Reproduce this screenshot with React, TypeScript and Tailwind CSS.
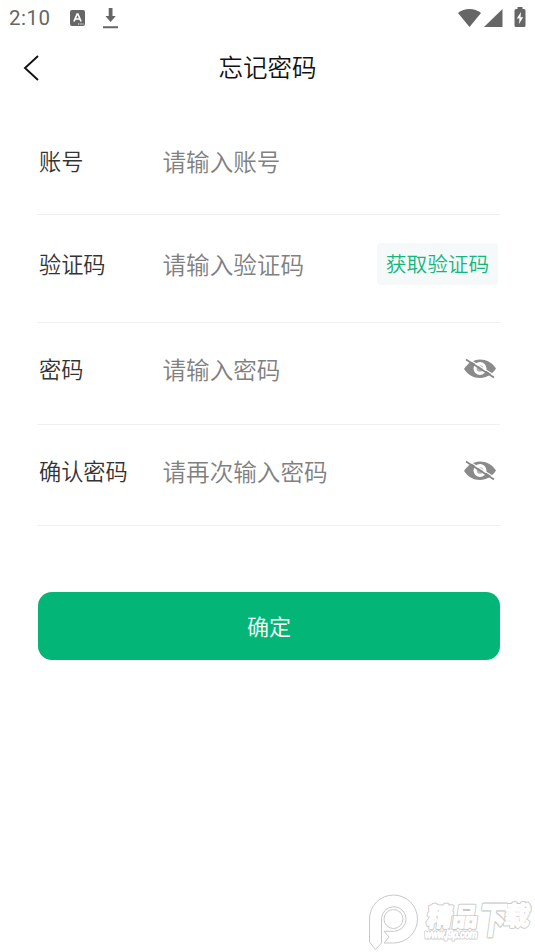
import { useState, type ReactNode } from "react";

type FieldProps = {
  id: string;
  label: string;
  placeholder: string;
  type?: string;
  className: string;
  children?: ReactNode;
};

function StatusBar() {
  return (
    <div className="flex h-9 items-center justify-between pl-[9px] pr-[9px] text-[#666]">
      <div className="flex items-center">
        <span className="w-[61px] font-[Roboto,sans-serif] text-[20.5px] leading-9 tracking-[0.5px]">
          2:10
        </span>
        <svg width="15" height="16" viewBox="0 0 15 16">
          <rect width="15" height="16" rx="2" fill="currentColor" />
          <path
            d="M4 11.5 7.1 4h.8l3.1 7.5M5.2 9h4.6"
            fill="none"
            stroke="#fff"
            strokeWidth="1.7"
          />
          <path d="M8 14h1.3M10.3 14h1.3M12.5 14h1" stroke="#fff" />
        </svg>
        <svg className="ml-[18px]" width="15" height="21" viewBox="0 0 15 21">
          <path
            d="M5.7 0h3.8v8h3.3l-5.2 6-5.2-6h3.3zM0 18.2h15v2H0z"
            fill="currentColor"
          />
        </svg>
      </div>
      <div className="flex items-center">
        <svg width="23" height="19" viewBox="0 0 23 19" fill="currentColor">
          <path d="M0 4Q5 0 11.5 0T23 4L11.5 18z" />
        </svg>
        <svg
          className="ml-[3px]"
          width="19"
          height="19"
          viewBox="0 0 19 19"
          fill="currentColor"
        >
          <path d="M18.5 0v18H0z" />
        </svg>
        <svg
          className="mb-0.5 ml-[11px]"
          width="12"
          height="20"
          viewBox="0 0 12 20"
        >
          <path
            d="M3.5 0h5v2H10a1.5 1.5 0 0 1 1.5 1.5v15A1.5 1.5 0 0 1 10 20H2a1.5 1.5 0 0 1-1.5-1.5v-15A1.5 1.5 0 0 1 2 2h1.5z"
            fill="currentColor"
          />
          <path d="M7 5 2.8 11.5h2.7L5 17l4.2-6.7H6.5z" fill="#fff" />
        </svg>
      </div>
    </div>
  );
}

function EyeOffIcon() {
  return (
    <svg width="32" height="22" viewBox="0 0 32 22">
      <path
        d="M0 11C4 5 9.500 1.500 16 1.500s12 3 16 9c-4 6-9.500 9.500-16 9.500S4 17 0 11z"
        fill="#8a8a8a"
      />
      <circle cx="16" cy="10.500" r="6.500" fill="#fff" />
      <circle cx="16" cy="10.500" r="3.300" fill="#b0b0b0" />
      <path d="M3 0 31 17.700" stroke="#fff" strokeWidth="1.200" />
      <path d="M2 1.500 30 19.500" stroke="#858585" strokeWidth="1.700" />
    </svg>
  );
}

function PasswordToggle({ onClick }: { onClick: () => void }) {
  return (
    <button
      type="button"
      aria-label="显示密码"
      className="mr-1 mb-px shrink-0"
      onClick={onClick}
    >
      <EyeOffIcon />
    </button>
  );
}

function Field({
  id,
  label,
  placeholder,
  type = "text",
  className,
  children,
}: FieldProps) {
  return (
    <div
      className={`flex items-center border-b border-[#f0f0f0] pl-0.5 ${className}`}
    >
      <label
        htmlFor={id}
        className="mb-[3px] w-[123.500px] shrink-0 text-[22.2px] leading-8 font-[350] text-[#333]"
      >
        {label}
      </label>
      <input
        id={id}
        type={type}
        placeholder={placeholder}
        className="mb-px h-9 min-w-0 flex-1 bg-transparent text-[23.6px] font-[350] text-[#333] outline-none placeholder:text-[#808080]"
      />
      {children}
    </div>
  );
}

function WatermarkText() {
  return (
    <>
      <g className="font-['Noto_Sans_CJK_SC',sans-serif] font-bold">
        <text transform="translate(66 41) skewX(-8)" fontSize="25.5">
          精品
        </text>
        <text transform="translate(118 48) skewX(-8) scale(1 1.4)" fontSize="26">
          下
        </text>
        <text transform="translate(143 40) skewX(-8)" fontSize="26">
          载
        </text>
      </g>
      <text
        x="65"
        y="53"
        fontSize="11"
        textLength="52"
        lengthAdjust="spacingAndGlyphs"
        className="font-['Liberation_Sans',sans-serif] italic"
      >
        www.j9p.com
      </text>
    </>
  );
}

function Watermark() {
  return (
    <svg
      className="pointer-events-none absolute right-0 bottom-0"
      width="175"
      height="67"
      viewBox="0 0 175 67"
      fill="#fff"
      stroke="#c9c9c9"
    >
      <path d="M9.5 57V34a24 24 0 1 1 24 24H24l5-6-5-5.700h9.500a12.300 12.300 0 1 0-12-12.300v24l-6 6.500z" />
      <circle cx="33.5" cy="34" r="9.5" />
      {/* grey rim first, white lettering over it */}
      <g strokeWidth="3.200" strokeLinejoin="round">
        <WatermarkText />
      </g>
      <g stroke="#fff" strokeWidth="1.400" strokeLinejoin="round">
        <WatermarkText />
      </g>
    </svg>
  );
}

export default function App() {
  const [showPassword, setShowPassword] = useState(false);
  const [showConfirm, setShowConfirm] = useState(false);

  return (
    <div className="relative h-[952px] w-full overflow-hidden bg-white font-['Noto_Sans_CJK_SC',sans-serif]">
      <StatusBar />
      <header className="grid h-16 grid-cols-[60px_1fr_60px] items-center">
        <button type="button" aria-label="返回" className="pl-[23px]">
          <svg width="16" height="26" viewBox="0 0 16 26">
            <path
              d="M15 1 2 13l13 12"
              fill="none"
              stroke="#111"
              strokeWidth="1.9"
            />
          </svg>
        </button>
        <h1 className="mb-0.5 text-center text-[24.5px] leading-9 font-[350] text-[#111]">
          忘记密码
        </h1>
      </header>
      <form
        className="mt-2 pr-[35px] pl-[37px]"
        onSubmit={(e) => e.preventDefault()}
      >
        <Field
          id="account"
          label="账号"
          placeholder="请输入账号"
          className="h-[107px]"
        />
        <Field
          id="code"
          label="验证码"
          placeholder="请输入验证码"
          className="h-[108px] pb-2"
        >
          <button
            type="button"
            className="mr-0.5 mb-px h-[42px] w-[121px] shrink-0 rounded bg-[#f5f9f9] text-[20.7px] font-[350] text-[#14b67c]"
          >
            获取验证码
          </button>
        </Field>
        <Field
          id="password"
          label="密码"
          placeholder="请输入密码"
          type={showPassword ? "text" : "password"}
          className="h-[102px] pb-2"
        >
          <PasswordToggle onClick={() => setShowPassword(!showPassword)} />
        </Field>
        <Field
          id="confirm"
          label="确认密码"
          placeholder="请再次输入密码"
          type={showConfirm ? "text" : "password"}
          className="h-[101px] pb-2"
        >
          <PasswordToggle onClick={() => setShowConfirm(!showConfirm)} />
        </Field>
        <button
          type="submit"
          className="mt-[66px] ml-px h-[68px] w-[462px] rounded-[14px] bg-[#04b578] pb-0.5 text-[22px] font-[350] text-white"
        >
          确定
        </button>
      </form>
      <Watermark />
    </div>
  );
}
